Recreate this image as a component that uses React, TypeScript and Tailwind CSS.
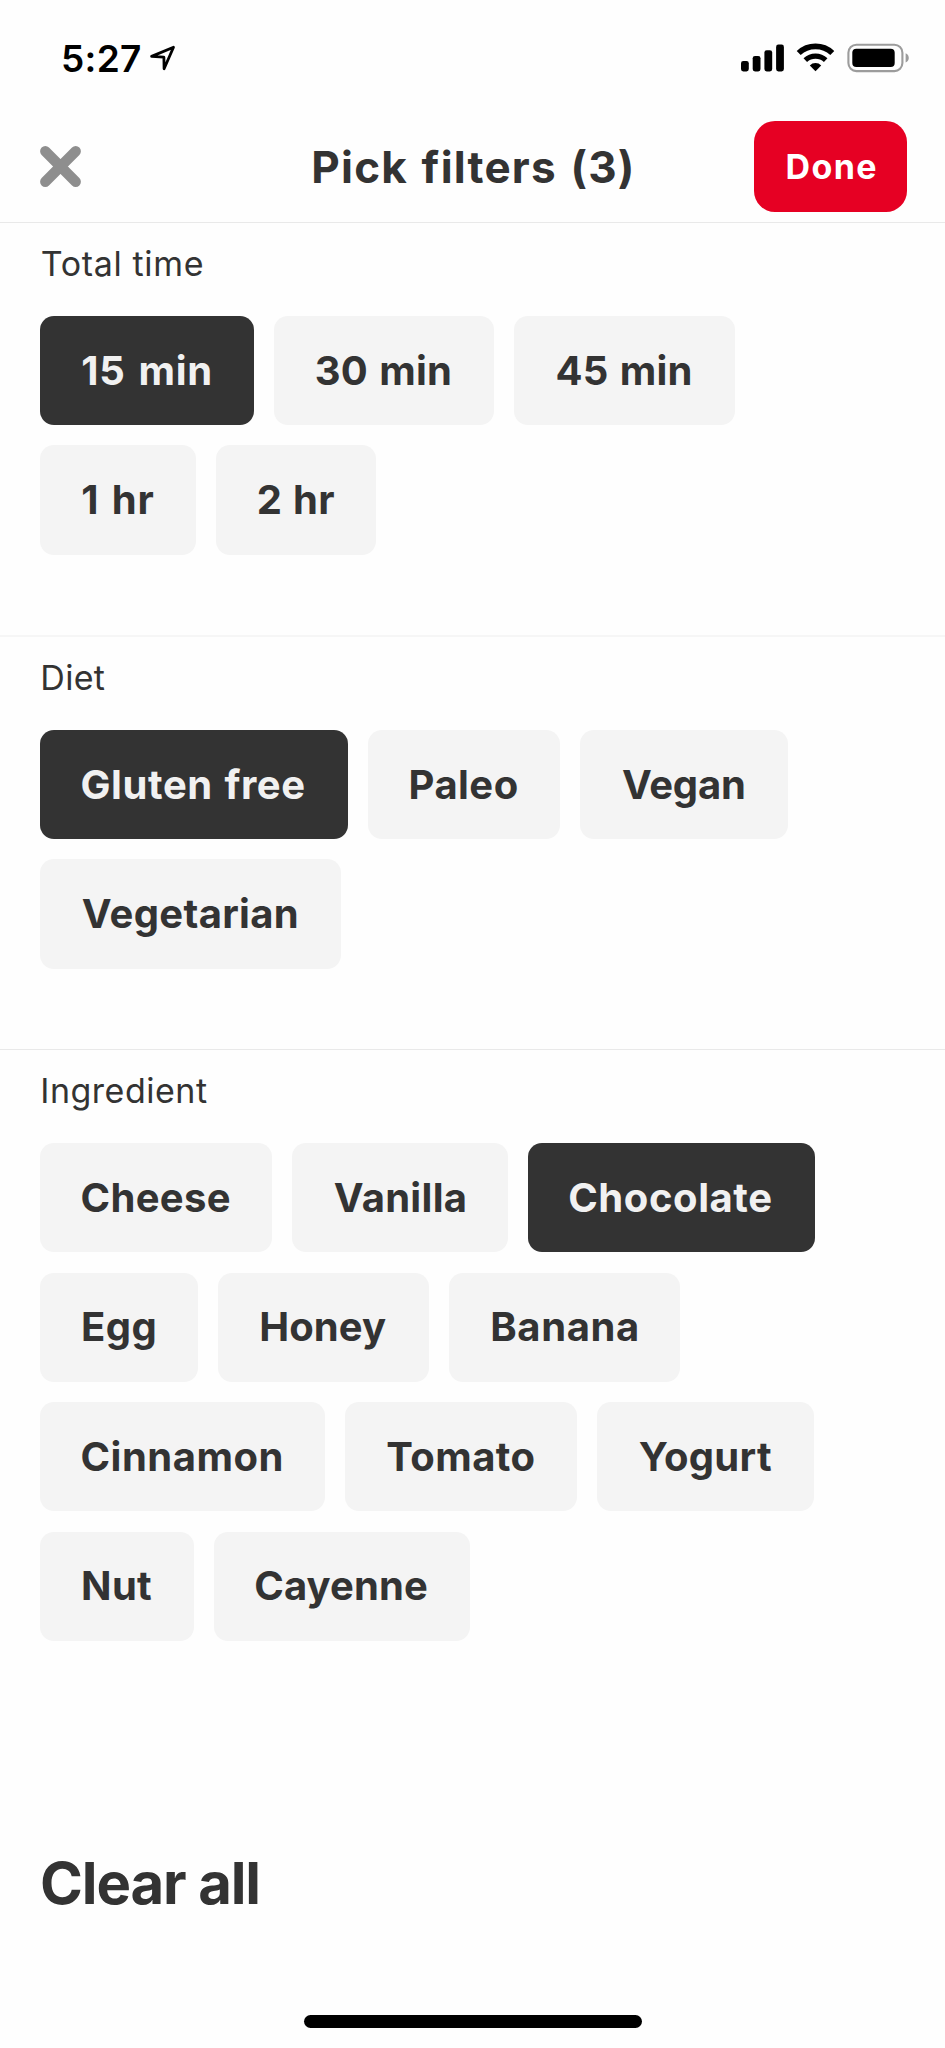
import clsx from "clsx";

type Chip = { label: string; size: string; active?: boolean };

const TIMES: Chip[] = [
  { label: "15 min", size: "w-[213.5px] pl-[41px] tracking-[0.75px] [word-spacing:2.6px]", active: true },
  { label: "30 min", size: "w-[220.3px] pl-[40.7px] tracking-[0.2px] [word-spacing:1.7px]" },
  { label: "45 min", size: "w-[220.3px] pl-[41px] tracking-[0.2px] [word-spacing:1.6px]" },
  { label: "1 hr", size: "w-[155.4px] pl-[41px] tracking-[0.9px] [word-spacing:2px]" },
  { label: "2 hr", size: "w-[160.2px] pl-[41px] tracking-[0.2px] [word-spacing:1.2px]" },
];

const DIETS: Chip[] = [
  { label: "Gluten free", size: "w-[307.4px] pl-[40.2px] tracking-[0.6px] [word-spacing:1.5px]", active: true },
  { label: "Paleo", size: "w-[192.2px] pl-[40.7px] tracking-[0.45px]" },
  { label: "Vegan", size: "w-[207.6px] pl-[41.8px] tracking-[-0.2px]" },
  { label: "Vegetarian", size: "w-[300.6px] pl-[41.5px] tracking-[0.33px]" },
];

const INGREDIENTS: Chip[] = [
  { label: "Cheese", size: "w-[231.8px] pl-[40.2px] tracking-[0.35px]" },
  { label: "Vanilla", size: "w-[215.6px] pl-[41.6px] tracking-[0.3px]" },
  { label: "Chocolate", size: "w-[286.6px] pl-[40.2px] tracking-[0.57px]", active: true },
  { label: "Egg", size: "w-[158px] pl-[40.8px] tracking-[0.46px]" },
  { label: "Honey", size: "w-[210.8px] pl-[40.8px] tracking-[0.1px]" },
  { label: "Banana", size: "w-[230.8px] pl-[40.8px] tracking-[0.62px]" },
  { label: "Cinnamon", size: "w-[284.6px] pl-[40.2px] tracking-[0.5px]" },
  { label: "Tomato", size: "w-[231.8px] pl-[41.2px] tracking-[0.45px]" },
  { label: "Yogurt", size: "w-[217.2px] pl-[41.8px] tracking-[0.3px]" },
  { label: "Nut", size: "w-[153.6px] pl-[40.8px] tracking-[0.3px]" },
  { label: "Cayenne", size: "w-[256px] pl-[40.2px] tracking-[0.1px]" },
];

function FilterChip({ label, size, active }: Chip) {
  return (
    <button
      type="button"
      aria-pressed={!!active}
      className={clsx(
        "h-[109.2px] shrink-0 rounded-[14px] text-left text-[40px] leading-none font-bold whitespace-nowrap",
        size,
        active ? "bg-[#333333] text-[#f1f1f1]" : "bg-[#f4f4f4] text-[#333333]",
      )}
    >
      {label}
    </button>
  );
}

function FilterSection({
  title,
  titleClass,
  className,
  chips,
}: {
  title: string;
  titleClass: string;
  className: string;
  chips: Chip[];
}) {
  return (
    <section className={clsx("pr-[40px] pl-[40.3px]", className)}>
      <h2 className={clsx("text-[34px] leading-[40px] font-normal text-[#333333]", titleClass)}>{title}</h2>
      <div className="flex flex-wrap gap-x-[20.16px] gap-y-[20.3px]">
        {chips.map((chip) => (
          <FilterChip key={chip.label} {...chip} />
        ))}
      </div>
    </section>
  );
}

function StatusBar() {
  return (
    <div className="flex h-[111px] items-center pt-[5px] pr-[36px] pl-[61px] text-black">
      <span className="text-[37px] leading-none font-semibold tracking-[0.3px]">5:27</span>
      <svg className="ml-[7px]" width="28" height="30" viewBox="149 43 28 30" fill="none" aria-hidden="true">
        <path
          d="M173.5 47.2 151.6 56.4 163.9 57.2 164.1 68.8Z"
          stroke="currentColor"
          strokeWidth="2.8"
          strokeLinejoin="round"
        />
      </svg>
      <div className="ml-auto flex items-center gap-[12px]">
        <svg width="43" height="30" viewBox="741 43 43 30" fill="currentColor" aria-hidden="true">
          <rect x="741" y="61" width="7.8" height="10.4" rx="2.3" />
          <rect x="752.7" y="56" width="7.8" height="15.4" rx="2.3" />
          <rect x="764.4" y="50.3" width="7.8" height="21.1" rx="2.3" />
          <rect x="776.1" y="44.6" width="7.8" height="26.8" rx="2.3" />
        </svg>
        <svg width="39" height="30" viewBox="796 43 39 30" fill="none" aria-hidden="true">
          <path d="M798.7 53A24.6 24.6 0 0 1 832.3 53" stroke="currentColor" strokeWidth="5.8" />
          <path d="M805.3 60.2A15 15 0 0 1 825.7 60.2" stroke="currentColor" strokeWidth="5.2" />
          <path d="M815.5 71.3 809.8 65.4A8 8 0 0 1 821.2 65.4Z" fill="currentColor" />
        </svg>
        <svg width="62" height="30" viewBox="847 43 62 30" aria-hidden="true">
          <rect x="848.4" y="44.7" width="54" height="26.4" rx="8" fill="none" stroke="#9c9c9c" strokeWidth="2.1" />
          <rect x="852.3" y="48.8" width="42.4" height="18.3" rx="4" fill="currentColor" />
          <path d="M905.6 53.3C907.6 54.1 908.8 55.9 908.8 57.9 908.8 59.9 907.6 61.7 905.6 62.5Z" fill="#9c9c9c" />
        </svg>
      </div>
    </div>
  );
}

export default function App() {
  return (
    <div className="flex h-[2048px] w-[945px] flex-col overflow-hidden bg-[#fefefe] font-['Inter',sans-serif]">
      <StatusBar />
      <header className="grid h-[112px] grid-cols-[1fr_auto_1fr] items-center border-b border-[#e9e9e9] pr-[38px] pl-[40px]">
        <button type="button" aria-label="Close" className="justify-self-start text-[#8e8e8e]">
          <svg width="41" height="41" viewBox="0 0 41 41" fill="none" aria-hidden="true">
            <path d="M5.3 5.3 35.7 35.7M35.7 5.3 5.3 35.7" stroke="currentColor" strokeWidth="10.4" strokeLinecap="round" />
          </svg>
        </button>
        <h1 className="text-[44px] leading-none font-bold tracking-[1.2px] text-[#333333] [word-spacing:2px]">
          Pick filters (3)
        </h1>
        <button
          type="button"
          className="h-[90.7px] w-[152.7px] justify-self-end rounded-[21px] bg-[#e60023] pl-[2px] text-[34px] leading-none font-bold tracking-[1.4px] text-white"
        >
          Done
        </button>
      </header>
      <main>
        <FilterSection
          title="Total time"
          titleClass="mb-[32px] pl-[0.5px] tracking-[0.65px]"
          className="pt-[21px] pb-[80.3px]"
          chips={TIMES}
        />
        <FilterSection
          title="Diet"
          titleClass="mb-[32.3px] tracking-[0.3px]"
          className="border-t-2 border-[#f6f6f6] pt-[20.7px] pb-[80.3px]"
          chips={DIETS}
        />
        <FilterSection
          title="Ingredient"
          titleClass="mb-[31.9px] tracking-[0.5px]"
          className="border-t border-[#e9e9e9] pt-[21.3px]"
          chips={INGREDIENTS}
        />
        <button
          type="button"
          className="mt-[207px] ml-[40px] block text-[58px] leading-[70px] font-bold tracking-[-1.1px] text-[#333333]"
        >
          Clear all
        </button>
      </main>
      <div className="mt-auto mb-[20.4px] ml-[304px] h-[12.6px] w-[338px] shrink-0 rounded-full bg-black" />
    </div>
  );
}
